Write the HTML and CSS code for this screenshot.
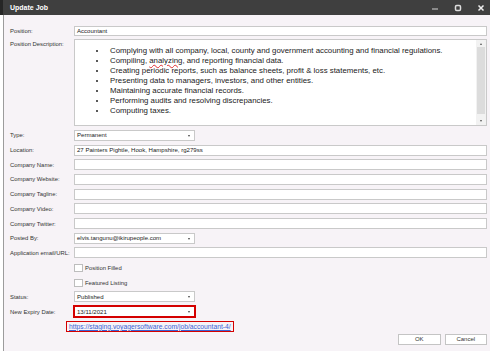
FILE: index.html
```html
<!DOCTYPE html>
<html>
<head>
    <link rel="stylesheet" href="styles.css">
</head>
<body>
    <div class="titlebar">
        <span class="title">Update Job</span>
        <div class="controls">
            <svg class="ctl" viewBox="0 0 10 10"><line x1="2" y1="6" x2="8" y2="6" stroke="#bbb" stroke-width="1.2"/></svg>
            <svg class="ctl" viewBox="0 0 10 10"><rect x="2.5" y="2.5" width="5" height="5" rx="1.2" fill="none" stroke="#ddd" stroke-width="1.5"/></svg>
            <svg class="ctl" viewBox="0 0 10 10"><path d="M2.5 2.5L7.5 7.5M7.5 2.5L2.5 7.5" stroke="#eee" stroke-width="1.5"/></svg>
        </div>
    </div>

    <div class="window">
        <div class="form">
            <label>Position:</label>
            <div class="field">Accountant</div>

            <label class="top">Position Description:</label>
            <div class="memo">
                <ul class="desc">
                    <li>Complying with all company, local, county and government accounting and financial regulations.</li>
                    <li>Compiling, <span class="spell">analyzing</span>, and reporting financial data.</li>
                    <li>Creating periodic reports, such as balance sheets, profit &amp; loss statements, etc.</li>
                    <li>Presenting data to managers, investors, and other entities.</li>
                    <li>Maintaining accurate financial records.</li>
                    <li>Performing audits and resolving discrepancies.</li>
                    <li>Computing taxes.</li>
                </ul>
                <div class="scrollbar">
                    <span class="arrow up"></span>
                    <span class="thumb"></span>
                    <span class="arrow down"></span>
                </div>
            </div>

            <label>Type:</label>
            <div class="field combo">Permanent</div>

            <label>Location:</label>
            <div class="field">27 Painters Pightle, Hook, Hampshire, rg279ss</div>

            <label>Company Name:</label>
            <div class="field"></div>

            <label>Company Website:</label>
            <div class="field"></div>

            <label>Company Tagline:</label>
            <div class="field"></div>

            <label>Company Video:</label>
            <div class="field"></div>

            <label>Company Twitter:</label>
            <div class="field"></div>

            <label>Posted By:</label>
            <div class="field combo">elvis.tangunu@ikirupeople.com</div>

            <label>Application email/URL:</label>
            <div class="field"></div>

            <label></label>
            <div class="check"><span class="box"></span>Position Filled</div>

            <label></label>
            <div class="check"><span class="box"></span>Featured Listing</div>

            <label>Status:</label>
            <div class="field combo">Published</div>

            <label>New Expiry Date:</label>
            <div class="field combo marked">13/11/2021</div>

            <label></label>
            <div class="linkrow"><a class="joblink" href="#">https://staging.voyagersoftware.com/job/accountant-4/</a></div>
        </div>

        <div class="buttons">
            <button>OK</button>
            <button>Cancel</button>
        </div>
    </div>
</body>
</html>
```

FILE: styles.css
```css
body {
    margin: 0;
    background: #ffffff;
    font-family: "Liberation Sans", Arial, sans-serif;
    font-size: 5.9px;
    color: #333;
    height: 351px;
    overflow: hidden;
}
.titlebar {
    height: 15px;
    background: #3f3f3f;
    border-left: 3px solid #262626;
    display: flex;
    align-items: center;
    justify-content: space-between;
}
.title {
    color: #fff;
    font-weight: bold;
    font-size: 7px;
    margin-left: 7px;
}
.controls {
    display: flex;
    gap: 13px;
    margin-right: 4px;
}
.ctl { width: 10px; height: 10px; }

.window {
    margin-left: 3px;
    border-left: 1px solid #9c9c9c;
    background: #f7f3f7;
    height: 336px;
    padding: 10.5px 3px 0 6px;
    box-sizing: border-box;
}
.form {
    display: grid;
    grid-template-columns: 64px 1fr;
    grid-template-rows: 10px 87px;
    grid-auto-rows: 11px;
    row-gap: 3.7px;
}
.form label {
    display: flex;
    align-items: center;
    white-space: nowrap;
}
.form label.top { align-items: flex-start; padding-top: 2px; }
.field {
    background: #fff;
    border: 1px solid #c9c9c9;
    box-sizing: border-box;
    height: 100%;
    padding: 0 2px;
    display: flex;
    align-items: center;
    white-space: nowrap;
    color: #222;
    font-size: 6.05px;
}
.combo {
    width: 121px;
    position: relative;
}
.combo:after {
    content: '';
    position: absolute;
    right: 4px;
    top: 4px;
    border-left: 1.5px solid transparent;
    border-right: 1.5px solid transparent;
    border-top: 2px solid #444;
}
.marked {
    border-color: #d40000;
    outline: 1px solid #d40000;
}
.memo {
    background: #fff;
    border: 1px solid #c9c9c9;
    box-sizing: border-box;
    display: flex;
}
.desc {
    flex: 1;
    margin: 0;
    padding: 5.5px 0 0 32px;
    font-size: 7.85px;
    line-height: 10px;
    color: #222;
    list-style: disc;
}
.desc li { padding-left: 3px; }
.spell {
    text-decoration: underline wavy #e03030;
    text-decoration-thickness: 0.5px;
}
.scrollbar {
    width: 10px;
    background: #f2f2f2;
    display: flex;
    flex-direction: column;
    align-items: center;
}
.thumb {
    width: 8px;
    flex: 1;
    margin: 2px 0 6px;
    background: #dcdcdc;
}
.arrow {
    width: 0;
    height: 0;
    border-left: 1.5px solid transparent;
    border-right: 1.5px solid transparent;
    margin-top: 3px;
}
.arrow.up { border-bottom: 2px solid #555; }
.arrow.down { border-top: 2px solid #555; margin: 0 0 3px; }

.check {
    display: flex;
    align-items: center;
    gap: 2.5px;
    padding-top: 1px;
}
.box {
    width: 8.5px;
    height: 8.5px;
    background: #fff;
    border: 1px solid #bdbdbd;
    box-sizing: border-box;
}
.linkrow {
    display: flex;
    margin-left: -8px;
}
.joblink {
    display: flex;
    align-items: center;
    border: 1.4px solid #d40000;
    padding: 0 2px;
    color: #3a63d4;
    font-size: 6.75px;
}
.buttons {
    display: flex;
    justify-content: flex-end;
    gap: 4px;
    margin-top: 2px;
}
button {
    height: 11px;
    width: 42.5px;
    padding: 0;
    background: #fff;
    border: 1px solid #c4c4c4;
    font-family: "Liberation Sans", Arial, sans-serif;
    font-size: 6px;
    color: #333;
}
```
